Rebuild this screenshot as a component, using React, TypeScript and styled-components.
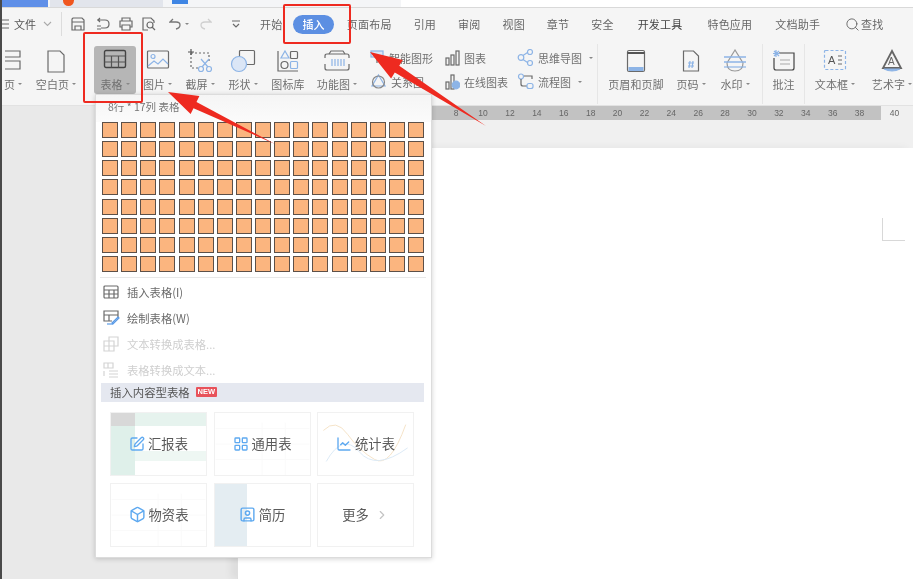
import React from "react";
import styled, { createGlobalStyle } from "styled-components";
import { SquarePen, LayoutGrid, ChartLine, Box, SquareUser, ChevronRight, Search } from "lucide-react";

const GlobalStyle = createGlobalStyle`
  html, body { margin: 0; padding: 0; background: #f0f0f0; }
  * { box-sizing: border-box; }
`;

const GRAY = "#6a6a6a";
const BLUE = "#8db4e6";

const Svg = ({ w = 24, h = 24, children }: { w?: number; h?: number; children: React.ReactNode }) => (
  <svg width={w} height={h} viewBox={`0 0 ${w} ${h}`} fill="none" stroke={GRAY} strokeWidth="1.2">
    {children}
  </svg>
);

/* ribbon icons */
const CoverIcon = () => (
  <Svg w={17} h={24}>
    <path d="M-3 2h18v6H-3M-3 12h18v8H-3" />
  </Svg>
);
const BlankIcon = () => (
  <Svg w={20} h={24}>
    <path d="M2 2h12l4 4v17H2z" />
  </Svg>
);
const TableIcon = () => (
  <Svg w={24} h={20}>
    <rect x="1.500" y="1.500" width="21" height="17" rx="1.500" stroke="#444" strokeWidth="1.400" />
    <path d="M1.500 7h21M1.500 13h21M8.500 7v11.500M15.500 7v11.500" stroke="#555" />
  </Svg>
);
const PictureIcon = () => (
  <Svg w={24} h={22}>
    <rect x="1.500" y="2" width="21" height="17" rx="1" />
    <circle cx="7" cy="7.500" r="2" stroke={BLUE} />
    <path d="M2 17l6-5 4 3 5-5 5 5" stroke={BLUE} />
  </Svg>
);
const CaptureIcon = () => (
  <Svg w={26} h={24}>
    <path d="M4 4h18v9M4 4v15h8" strokeDasharray="2 2" />
    <path d="M1 3h6M4 0v6" stroke="#555" />
    <circle cx="14" cy="20" r="2.500" stroke={BLUE} />
    <circle cx="22" cy="20" r="2.500" stroke={BLUE} />
    <path d="M15 18l7-8M21 18l-7-8" stroke={BLUE} />
  </Svg>
);
const ShapeIcon = () => (
  <Svg w={26} h={24}>
    <rect x="9.500" y="1.500" width="15" height="14" rx="1" />
    <circle cx="9" cy="15" r="7.500" fill="#dbe6f6" stroke={BLUE} />
  </Svg>
);
const IconLibIcon = () => (
  <Svg w={24} h={24}>
    <path d="M2 2v20h20" />
    <path d="M9 2l4 7H5z" stroke={BLUE} />
    <rect x="14.500" y="2.500" width="7" height="7" rx="1" />
    <circle cx="8.500" cy="16" r="3.500" />
    <rect x="14.500" y="12.500" width="7" height="7" rx="1" stroke={BLUE} />
  </Svg>
);
const FuncIcon = () => (
  <Svg w={26} h={24}>
    <path d="M5 5l2-3h12l2 3" />
    <path d="M1 9V7q0-2 2-2h20q2 0 2 2v2M1 15v4q0 2 2 2h20q2 0 2-2v-4" />
    <path d="M8 10v7M11 10v7M14 10v7M17 10v7M20 10v7" stroke={BLUE} />
  </Svg>
);
const HeaderIcon = () => (
  <Svg w={20} h={24}>
    <rect x="1.500" y="1.500" width="17" height="21" rx="1.500" />
    <path d="M1.500 4h17" stroke="#555" strokeWidth="2" />
    <rect x="2.500" y="18" width="15" height="4" fill={BLUE} stroke="none" />
  </Svg>
);
const PageNumIcon = () => (
  <Svg w={18} h={24}>
    <path d="M1.500 2h10l5 5v15h-15z" />
    <path d="M6 14h6M6 17h6M8 12l-1 7M11 12l-1 7" stroke={BLUE} />
  </Svg>
);
const WaterIcon = () => (
  <Svg w={24} h={24}>
    <path d="M12 1L4 14q0 8 8 8t8-8z" stroke="#999" />
    <path d="M1 8h22M1 13h22" stroke={BLUE} strokeWidth="1.400" />
    <path d="M1 18h22" stroke={BLUE} />
  </Svg>
);
const CommentIcon = () => (
  <Svg w={24} h={24}>
    <path d="M7 4h15v15q0 2-2 2H4q-2 0-2-2V9" stroke="#444" />
    <path d="M8 11h10M8 15h10" stroke="#aaa" />
    <path d="M4 1v7M1 4.500h7M2 2l5 5M7 2l-5 5" stroke={BLUE} />
  </Svg>
);
const TextBoxIcon = () => (
  <Svg w={24} h={22}>
    <rect x="1.500" y="1.500" width="21" height="19" rx="1" stroke={BLUE} strokeDasharray="3 2" />
    <text x="5" y="15" fontSize="11" fontFamily="Liberation Sans" fill="#555" stroke="none">A</text>
    <path d="M15 7h4M15 11h4M15 15h4" />
  </Svg>
);
const ArtTextIcon = () => (
  <Svg w={24} h={24}>
    <path d="M12 2L3 19h18z" strokeWidth="1.800" stroke="#666" />
    <text x="8" y="16" fontSize="10" fontFamily="Liberation Sans" fill="#666" stroke="none">A</text>
    <path d="M4 20q8 4 16 0z" fill={BLUE} stroke={BLUE} />
  </Svg>
);
const SmartIcon = () => (
  <Svg w={15} h={15}>
    <rect x="1" y="1" width="12" height="6" fill="#dbe6f6" stroke={BLUE} />
    <path d="M7 7v6" />
  </Svg>
);
const RelationIcon = () => (
  <Svg w={17} h={17}>
    <path d="M8.500 2L15 13H2z" stroke={BLUE} />
    <circle cx="8.500" cy="9" r="6" stroke="#888" />
  </Svg>
);
const BarsIcon = () => (
  <Svg w={15} h={16}>
    <rect x="1" y="8" width="3" height="7" />
    <rect x="6" y="5" width="3" height="10" />
    <rect x="11" y="1" width="3" height="14" />
  </Svg>
);
const OnlineBarsIcon = () => (
  <Svg w={15} h={17}>
    <rect x="1" y="9" width="3" height="7" />
    <rect x="6" y="2" width="3" height="14" />
    <circle cx="11" cy="12" r="3.800" fill={BLUE} stroke={BLUE} />
  </Svg>
);
const MindIcon = () => (
  <Svg w={17} h={17}>
    <circle cx="4" cy="8.500" r="2.800" stroke={BLUE} />
    <circle cx="13" cy="3" r="2.500" stroke={BLUE} />
    <circle cx="13" cy="14" r="2.500" stroke={BLUE} />
    <path d="M6 6.500L10.500 3.500M6 10.500l4.500 3" stroke={BLUE} />
  </Svg>
);
const FlowIcon = () => (
  <Svg w={17} h={17}>
    <circle cx="4" cy="3.500" r="2.500" stroke={BLUE} />
    <path d="M4 6v5q0 2 2 2h4M7 3h8v3" />
    <rect x="10" y="10.500" width="6" height="5" rx="2" stroke={BLUE} />
  </Svg>
);

/* quick access icons */
const SaveIcon = () => (
  <Svg w={14} h={14}>
    <path d="M2 1h9l2 2v10H1V2z" />
    <path d="M1 5h12M4 13V9h6v4" />
  </Svg>
);
const BackIcon = () => (
  <Svg w={15} h={14}>
    <path d="M1 3h8q4 0 4 4t-4 4H5M4 1l-2 2 2 2M1 9h4M1 12h4" />
  </Svg>
);
const PrintIcon = () => (
  <Svg w={14} h={14}>
    <path d="M3 4V1h8v3M3 10H1V4h12v6h-2M3 8h8v5H3z" />
  </Svg>
);
const PreviewIcon = () => (
  <Svg w={15} h={14}>
    <path d="M6 13H1V1h8l3 3v2" />
    <circle cx="8" cy="8" r="3" />
    <path d="M10 10l3 3" />
  </Svg>
);
const UndoIcon = ({ muted }: { muted?: boolean }) => (
  <svg width="13" height="12" viewBox="0 0 13 12" fill="none" stroke={muted ? "#cfcfcf" : "#777"} strokeWidth="1.300">
    <path d={muted ? "M9 1l3 3H6Q2 4 2 7t4 4" : "M4 1L1 4h6q4 0 4 3t-4 4"} />
  </svg>
);
const MoreIcon = () => (
  <Svg w={10} h={10}>
    <path d="M1 2h8M2 5l3 3 3-3" />
  </Svg>
);
const MenuLines = () => (
  <Svg w={7} h={10}>
    <path d="M0 1h7M0 5h7M0 9h7" />
  </Svg>
);
const FileChevron = () => (
  <svg width="9" height="6" viewBox="0 0 9 6" fill="none" stroke="#aaa" strokeWidth="1.100">
    <path d="M1 1l3.500 3.500L8 1" />
  </svg>
);

/* dropdown menu icons */
const MenuTableIcon = () => (
  <Svg w={16} h={14}>
    <rect x="1" y="1" width="14" height="12" rx="1" />
    <path d="M1 5h14M1 9h14M6 5v8M11 5v8" />
  </Svg>
);
const DrawTableIcon = () => (
  <Svg w={17} h={15}>
    <path d="M9 11H1V1h14v6M1 5h14M6 5v6" />
    <path d="M9 13l6-6 1 1-6 6z" stroke="#5a9ae6" />
    <path d="M4 14h6" stroke="#5a9ae6" />
  </Svg>
);
const TextToTableIcon = () => (
  <svg width="16" height="16" viewBox="0 0 16 16" fill="none" stroke="#d4d4d4" strokeWidth="1.200">
    <path d="M6 5V1h9v9h-4M1 5h10v10H1zM1 10h10M6 5v10" />
  </svg>
);
const TableToTextIcon = () => (
  <svg width="16" height="16" viewBox="0 0 16 16" fill="none" stroke="#d4d4d4" strokeWidth="1.200">
    <path d="M1 1h9v5H1zM5 1v5M6 9h9M6 12h9M6 15h9M1 9v5" />
  </svg>
);

const Frame = styled.div`
  position: relative;
  width: 913px;
  height: 579px;
  overflow: hidden;
  display: flex;
  flex-direction: column;
  background: #f3f3f3;
  border-left: 2px solid #4a4a4a;
  font-family: "Noto Sans CJK SC", "Liberation Sans", sans-serif;
  filter: blur(0.55px);
`;

const TabStrip = styled.div`
  flex: none;
  height: 8px;
  display: flex;
  background: #f4f5f7;
  border-bottom: 1px solid #d9d9d9;
`;

const DocTab = styled.div<{ $w: number; $bg: string; $ml?: number; $pl?: number }>`
  flex: none;
  width: ${(p) => p.$w}px;
  margin-left: ${(p) => p.$ml ?? 0}px;
  padding-left: ${(p) => p.$pl ?? 0}px;
  background: ${(p) => p.$bg};
  display: flex;
`;

const TabBadge = styled.span<{ $c: string; $round?: boolean }>`
  width: ${(p) => (p.$round ? 11 : 16)}px;
  height: ${(p) => (p.$round ? 6 : 4)}px;
  background: ${(p) => p.$c};
  border-radius: ${(p) => (p.$round ? "0 0 8px 8px" : "0")};
`;

const MenuRow = styled.div`
  flex: none;
  height: 32px;
  display: flex;
  align-items: center;
  background: #f5f5f5;
  font-size: 11px;
  color: #666;
`;

const QuickBar = styled.div`
  flex: none;
  width: 258px;
  height: 100%;
  display: flex;
  align-items: center;
`;

const FileLabel = styled.span`
  margin: 0 7px 0 5px;
  color: #555;
`;

const QuickSep = styled.span`
  width: 1px;
  height: 24px;
  background: #dcdcdc;
  margin: 0 9px 0 9px;
`;

const QuickSlot = styled.span<{ $w: number }>`
  flex: none;
  width: ${(p) => p.$w}px;
  display: flex;
  align-items: center;
`;

const SmallCaret = styled.span`
  display: inline-block;
  width: 0;
  height: 0;
  margin-left: 3px;
  border-left: 2px solid transparent;
  border-right: 2px solid transparent;
  border-top: 2.500px solid #888;
`;

const Tabs = styled.div`
  display: flex;
  align-items: center;
  gap: 22px;
`;

const Tab = styled.span<{ $active?: boolean; $strong?: boolean; $ml?: number; $mr?: number }>`
  flex: none;
  letter-spacing: 0.2px;
  white-space: nowrap;
  margin-left: ${(p) => p.$ml ?? 0}px;
  margin-right: ${(p) => p.$mr ?? 0}px;
  color: ${(p) => (p.$active ? "#fff" : p.$strong ? "#444" : "#666")};
  ${(p) =>
    p.$active &&
    `
    background: #5c8fe2;
    height: 19px;
    line-height: 19px;
    padding: 0 9.500px;
    margin: 0 -9.500px;
    border-radius: 10px;
    font-weight: 500;
  `}
`;

const SearchTab = styled.span`
  display: flex;
  align-items: center;
  gap: 1px;
  margin-left: 3px;
`;

const Ribbon = styled.div`
  flex: none;
  height: 66px;
  display: flex;
  align-items: flex-start;
  padding-top: 6px;
  background: #f5f5f5;
  border-bottom: 1px solid #e2e2e2;
  overflow: hidden;
`;

const Tool = styled.div<{ $w: number; $ml?: number; $active?: boolean }>`
  flex: none;
  width: ${(p) => p.$w}px;
  margin-left: ${(p) => p.$ml ?? 0}px;
  height: 48px;
  display: flex;
  flex-direction: column;
  align-items: center;
  border-radius: 3px;
  background: ${(p) => (p.$active ? "#b6b6b6" : "transparent")};
`;

const ToolIcon = styled.div`
  height: 29px;
  padding-top: 3px;
  display: flex;
  align-items: flex-start;
  justify-content: center;
`;

const ToolLabel = styled.div`
  height: 17px;
  line-height: 16px;
  font-size: 11px;
  letter-spacing: 0.1px;
  color: #707070;
  white-space: nowrap;
  display: flex;
  align-items: center;
`;

const RibbonSep = styled.span`
  flex: none;
  width: 1px;
  height: 60px;
  margin-top: -2px;
  background: #e6e6e6;
`;

const StackCol = styled.div<{ $w: number; $ml?: number }>`
  flex: none;
  width: ${(p) => p.$w}px;
  margin-left: ${(p) => p.$ml ?? 0}px;
  display: flex;
  flex-direction: column;
  gap: 7px;
  padding-top: 3px;
`;

const StackItem = styled.div`
  height: 17px;
  display: flex;
  align-items: center;
  gap: 4px;
  font-size: 11px;
  color: #707070;
  white-space: nowrap;
`;

const Ruler = styled.div`
  flex: none;
  height: 14px;
  display: flex;
  background: linear-gradient(90deg, #e9e9e9 430px, #f0f0f0 430px);
  font-size: 8.500px;
  color: #666;
  font-family: "Liberation Sans", sans-serif;
`;

const RulerTrack = styled.div`
  flex: none;
  width: 454px;
  margin-left: 425px;
  display: flex;
  justify-content: flex-end;
  padding-right: 8px;
  background: #c2c2c2;
`;

const RulerNum = styled.span`
  flex: none;
  width: 26.900px;
  line-height: 14px;
  text-align: center;
`;

const Workspace = styled.div`
  flex: 1;
  display: flex;
  padding: 28px 0 0 235px;
  background: linear-gradient(#f0f0f0, #f0f0f0) right top / 676px 28px no-repeat, #e9e9e9;
`;

const Sheet = styled.div`
  position: relative;
  flex: 1;
  background: #fff;
  border-left: 1px solid #dedede;
  box-shadow: -6px 0 8px rgba(0, 0, 0, 0.06);
`;

const Margin = styled.span`
  position: absolute;
  left: 644px;
  top: 70px;
  width: 23px;
  height: 23px;
  border-left: 1px solid #d8d8d8;
  border-bottom: 1px solid #d8d8d8;
`;

const Dropdown = styled.div`
  position: absolute;
  left: 93px;
  top: 94px;
  width: 337px;
  height: 464px;
  display: flex;
  flex-direction: column;
  padding: 0 7px 0 4px;
  background: #fff;
  border: 1px solid #dcdcdc;
  box-shadow: 0 1px 5px rgba(0, 0, 0, 0.18);
`;

const GridHead = styled.div`
  flex: none;
  height: 27px;
  margin: 0 -7px 0 -4px;
  padding: 3px 0 0 12px;
  background: linear-gradient(#f5f5f5, #fbfbfb);
  font-size: 10.500px;
  line-height: 17px;
  color: #777;
`;

const CellGrid = styled.div`
  display: grid;
  grid-template-columns: repeat(17, 16px);
  grid-auto-rows: 16px;
  gap: 3.130px;
  margin-left: 2px;
`;

const Cell = styled.span`
  background: #fbb57f;
  border: 1.300px solid #5d5048;
`;

const Rule = styled.div`
  flex: none;
  height: 1px;
  margin: 5px -2px 1px 0;
  background: #e8e8e8;
`;

const MenuItem = styled.div<{ $off?: boolean }>`
  flex: none;
  height: 26px;
  display: flex;
  align-items: center;
  font-size: 11.300px;
  color: ${(p) => (p.$off ? "#cfcfcf" : "#6a6a6a")};
`;

const MenuGlyph = styled.span`
  flex: none;
  width: 27px;
  padding-left: 3px;
  display: flex;
`;

const SectionBar = styled.div`
  flex: none;
  height: 19px;
  margin-left: 1px;
  display: flex;
  align-items: center;
  gap: 6px;
  padding-left: 9px;
  background: #e5e8f0;
  font-size: 11.400px;
  color: #555;
`;

const NewTag = styled.span`
  width: 21px;
  height: 10px;
  border-radius: 1px;
  background: #e8525a;
  color: #fff;
  text-align: center;
  font: bold 7.500px/10px "Liberation Sans", sans-serif;
`;

const CardGrid = styled.div`
  display: grid;
  grid-template-columns: 97px 97px 97px;
  grid-auto-rows: 64px;
  column-gap: 6.500px;
  row-gap: 7px;
  margin: 10px 0 0 10px;
`;

const Card = styled.div<{ $kind?: "green" | "slate" }>`
  position: relative;
  display: flex;
  align-items: center;
  justify-content: center;
  gap: 3px;
  border: 1px solid #f1f1f1;
  font-size: 13.300px;
  color: #5a5a5a;
  background: ${(p) =>
    p.$kind === "green"
      ? "linear-gradient(#d8d8d8, #d8d8d8) 0 0 / 24px 13px no-repeat, linear-gradient(#dff0ea, #dff0ea) 0 0 / 24px 100% no-repeat, linear-gradient(#e6f3ee, #e6f3ee) 0 0 / 100% 13px no-repeat, linear-gradient(#eef7f3, #eef7f3) 0 38px / 100% 10px no-repeat, #fff"
      : p.$kind === "slate"
      ? "linear-gradient(#e4edf2, #e4edf2) 0 0 / 32px 100% no-repeat, #fff"
      : "#fff"};
`;

/* the pale table or chart behind a card's label */
const Faint = styled.svg`
  position: absolute;
  inset: 0;
  width: 100%;
  height: 100%;
`;

const CardIcon = styled.span`
  position: relative;
  display: flex;
  color: #5ea9f0;
`;

const CardText = styled.span`
  position: relative;
`;

const MoreGlyph = styled.span`
  display: flex;
  margin-left: 3px;
  color: #c4c4c4;
`;

const Annotation = styled.div<{ $l: number; $t: number; $w: number; $h: number }>`
  position: absolute;
  left: ${(p) => p.$l}px;
  top: ${(p) => p.$t}px;
  width: ${(p) => p.$w}px;
  height: ${(p) => p.$h}px;
  border: 2.500px solid #ee2a20;
  border-radius: 2px;
`;

const Arrows = styled.svg`
  position: absolute;
  left: -2px;
  top: 0;
  width: 913px;
  height: 579px;
  pointer-events: none;
`;

const Caret = () => <SmallCaret />;

const rulerNumbers = Array.from({ length: 16 }, (_, i) => 8 + i * 2);

const TableLines = () => (
  <Faint viewBox="0 0 97 64" fill="none" stroke="#fafafa">
    <path d="M0 16h97M0 32h97M0 48h97M48 10v54M72 10v54" />
  </Faint>
);

export default function App() {
  return (
    <>
      <GlobalStyle />
      <Frame>
        <TabStrip>
          <DocTab $w={46} $bg="#5f8fe8" />
          <DocTab $w={113} $bg="#e2e5ec" $ml={2} $pl={13}>
            <TabBadge $c="#f0561e" $round />
          </DocTab>
          <DocTab $w={235} $bg="#f4f5f7" $ml={3} $pl={6}>
            <TabBadge $c="#3f86e4" />
          </DocTab>
          <DocTab $w={513} $bg="#fff" />
        </TabStrip>

        <MenuRow>
          <QuickBar>
            <MenuLines />
            <FileLabel>文件</FileLabel>
            <FileChevron />
            <QuickSep />
            <QuickSlot $w={25}><SaveIcon /></QuickSlot>
            <QuickSlot $w={23}><BackIcon /></QuickSlot>
            <QuickSlot $w={23}><PrintIcon /></QuickSlot>
            <QuickSlot $w={27}><PreviewIcon /></QuickSlot>
            <QuickSlot $w={30}><UndoIcon /><Caret /></QuickSlot>
            <QuickSlot $w={32}><UndoIcon muted /></QuickSlot>
            <MoreIcon />
          </QuickBar>
          <Tabs>
            <Tab $mr={-2}>开始</Tab>
            <Tab $active>插入</Tab>
            <Tab>页面布局</Tab>
            <Tab>引用</Tab>
            <Tab>审阅</Tab>
            <Tab>视图</Tab>
            <Tab>章节</Tab>
            <Tab>安全</Tab>
            <Tab $strong $ml={2}>开发工具</Tab>
            <Tab $ml={3}>特色应用</Tab>
            <Tab $ml={1}>文档助手</Tab>
            <SearchTab>
              <Search size={15} strokeWidth={1.500} color="#666" />
              <Tab>查找</Tab>
            </SearchTab>
          </Tabs>
        </MenuRow>

        <Ribbon>
          <Tool $w={22}>
            <ToolIcon><CoverIcon /></ToolIcon>
            <ToolLabel>页<Caret /></ToolLabel>
          </Tool>
          <Tool $w={44} $ml={10}>
            <ToolIcon><BlankIcon /></ToolIcon>
            <ToolLabel>空白页<Caret /></ToolLabel>
          </Tool>
          <Tool $w={42} $ml={16} $active>
            <ToolIcon><TableIcon /></ToolIcon>
            <ToolLabel>表格<Caret /></ToolLabel>
          </Tool>
          <Tool $w={43}>
            <ToolIcon><PictureIcon /></ToolIcon>
            <ToolLabel>图片<Caret /></ToolLabel>
          </Tool>
          <Tool $w={42}>
            <ToolIcon><CaptureIcon /></ToolIcon>
            <ToolLabel>截屏<Caret /></ToolLabel>
          </Tool>
          <Tool $w={44}>
            <ToolIcon><ShapeIcon /></ToolIcon>
            <ToolLabel>形状<Caret /></ToolLabel>
          </Tool>
          <Tool $w={46}>
            <ToolIcon><IconLibIcon /></ToolIcon>
            <ToolLabel>图标库</ToolLabel>
          </Tool>
          <Tool $w={52}>
            <ToolIcon><FuncIcon /></ToolIcon>
            <ToolLabel>功能图<Caret /></ToolLabel>
          </Tool>
          <StackCol $w={75} $ml={7}>
            <StackItem><SmartIcon />智能图形</StackItem>
            <StackItem><RelationIcon />关系图</StackItem>
          </StackCol>
          <StackCol $w={72}>
            <StackItem><BarsIcon />图表</StackItem>
            <StackItem><OnlineBarsIcon />在线图表</StackItem>
          </StackCol>
          <StackCol $w={80}>
            <StackItem><MindIcon />思维导图<Caret /></StackItem>
            <StackItem><FlowIcon />流程图<Caret /></StackItem>
          </StackCol>
          <RibbonSep />
          <Tool $w={76}>
            <ToolIcon><HeaderIcon /></ToolIcon>
            <ToolLabel>页眉和页脚</ToolLabel>
          </Tool>
          <Tool $w={34}>
            <ToolIcon><PageNumIcon /></ToolIcon>
            <ToolLabel>页码<Caret /></ToolLabel>
          </Tool>
          <Tool $w={54}>
            <ToolIcon><WaterIcon /></ToolIcon>
            <ToolLabel>水印<Caret /></ToolLabel>
          </Tool>
          <RibbonSep />
          <Tool $w={41}>
            <ToolIcon><CommentIcon /></ToolIcon>
            <ToolLabel>批注</ToolLabel>
          </Tool>
          <RibbonSep />
          <Tool $w={60}>
            <ToolIcon><TextBoxIcon /></ToolIcon>
            <ToolLabel>文本框<Caret /></ToolLabel>
          </Tool>
          <Tool $w={54}>
            <ToolIcon><ArtTextIcon /></ToolIcon>
            <ToolLabel>艺术字<Caret /></ToolLabel>
          </Tool>
        </Ribbon>

        <Ruler>
          <RulerTrack>
            {rulerNumbers.map((n) => (
              <RulerNum key={n}>{n}</RulerNum>
            ))}
          </RulerTrack>
          <RulerNum>40</RulerNum>
        </Ruler>

        <Workspace>
          <Sheet>
            <Margin />
          </Sheet>
        </Workspace>

        <Dropdown>
          <GridHead>8行 * 17列 表格</GridHead>
          <CellGrid>
            {Array.from({ length: 8 * 17 }, (_, i) => (
              <Cell key={i} />
            ))}
          </CellGrid>
          <Rule />
          <MenuItem><MenuGlyph><MenuTableIcon /></MenuGlyph>插入表格(I)</MenuItem>
          <MenuItem><MenuGlyph><DrawTableIcon /></MenuGlyph>绘制表格(W)</MenuItem>
          <MenuItem $off><MenuGlyph><TextToTableIcon /></MenuGlyph>文本转换成表格...</MenuItem>
          <MenuItem $off><MenuGlyph><TableToTextIcon /></MenuGlyph>表格转换成文本...</MenuItem>
          <SectionBar>
            插入内容型表格
            <NewTag>NEW</NewTag>
          </SectionBar>
          <CardGrid>
            <Card $kind="green">
              <CardIcon><SquarePen size={16} strokeWidth={2} /></CardIcon>
              <CardText>汇报表</CardText>
            </Card>
            <Card>
              <TableLines />
              <CardIcon><LayoutGrid size={16} strokeWidth={2} /></CardIcon>
              <CardText>通用表</CardText>
            </Card>
            <Card>
              <Faint viewBox="0 0 97 64" fill="none" stroke="#f5e2c6">
                <path d="M5 18Q18 5 30 22T58 48T90 12" />
                <path d="M8 50Q25 20 42 40T92 36" stroke="#dbe9f6" />
              </Faint>
              <CardIcon><ChartLine size={16} strokeWidth={2} /></CardIcon>
              <CardText>统计表</CardText>
            </Card>
            <Card>
              <TableLines />
              <CardIcon><Box size={17} strokeWidth={2} /></CardIcon>
              <CardText>物资表</CardText>
            </Card>
            <Card $kind="slate">
              <CardIcon><SquareUser size={17} strokeWidth={2} /></CardIcon>
              <CardText>简历</CardText>
            </Card>
            <Card>
              <CardText>更多</CardText>
              <MoreGlyph><ChevronRight size={14} /></MoreGlyph>
            </Card>
          </CardGrid>
        </Dropdown>

        <Annotation $l={281} $t={4} $w={68} $h={40} />
        <Annotation $l={81} $t={32} $w={60} $h={71} />
        <Arrows viewBox="0 0 913 579" fill="#ee2a20">
          <polygon points="168,92 199.400,96.100 196.500,102 275,144 193.500,108.200 190.600,114.100" />
          <polygon points="370,52 402.900,59.900 399.200,65.800 486,126 394.800,72.600 391.100,78.500" />
        </Arrows>
      </Frame>
    </>
  );
}
